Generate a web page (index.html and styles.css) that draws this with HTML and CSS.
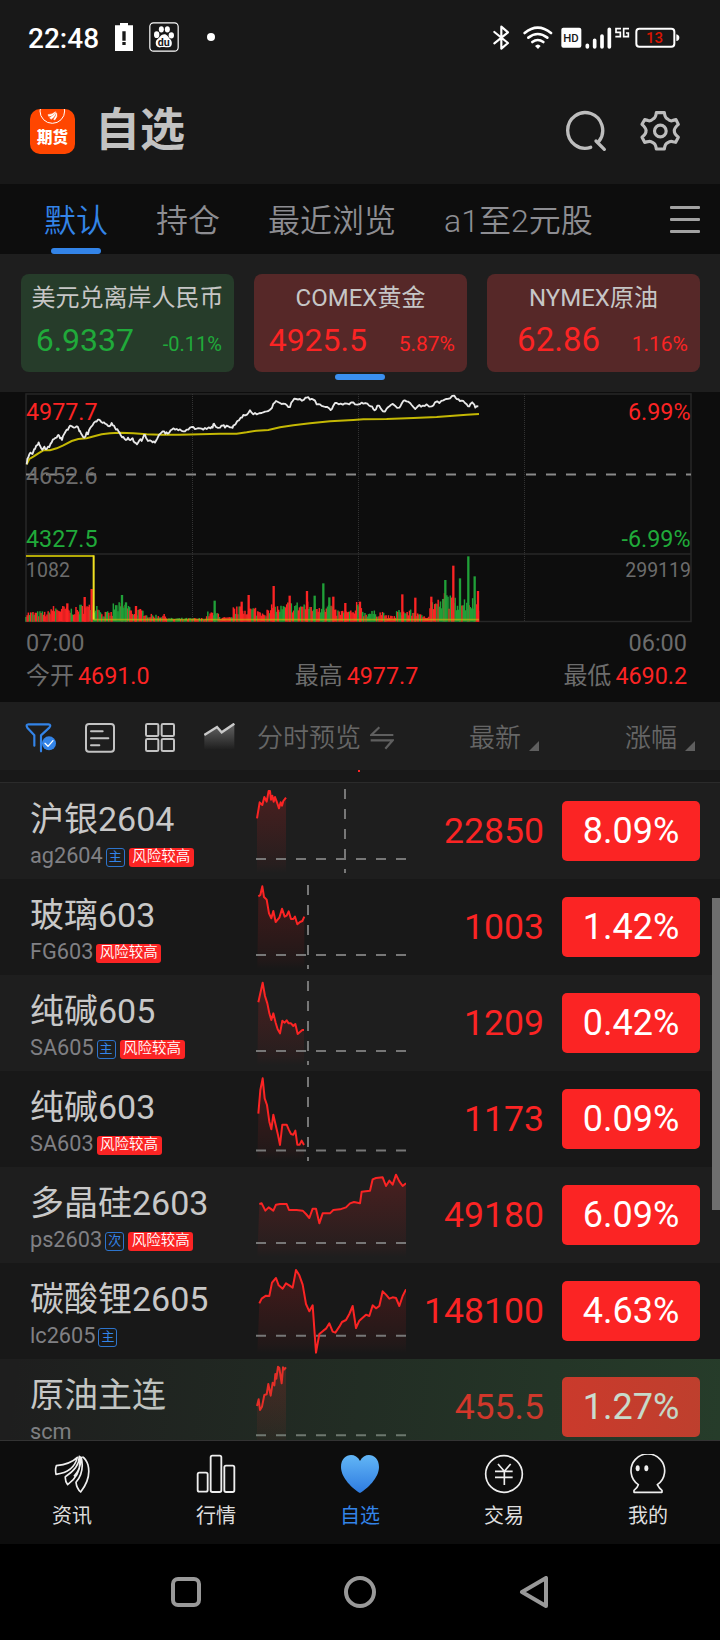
FILE: index.html
```html
<!DOCTYPE html>
<html lang="zh-CN">
<head>
<meta charset="utf-8">
<title>自选</title>
<link rel="stylesheet" href="styles.css">
</head>
<body>
<div class="phone">
  <div class="status">
    <div class="status-left">
      <span class="clock">22:48</span>
      <svg class="i-warn" width="18" height="28" viewBox="345 69 54 84"><path fill="#fff" d="M360 69h24v7h15v77h-54V76h15z"/><path fill="#181818" d="M367 94h10v28h-10zM367 126h10v9h-10z"/></svg>
      <svg class="i-paw" width="30" height="30" viewBox="447 66 90 90">
        <rect x="449.500" y="68.500" width="85" height="85" rx="11" fill="none" stroke="#fff" stroke-width="3.500"/>
        <g fill="#fff"><ellipse cx="470" cy="104" rx="8" ry="10"/><ellipse cx="484" cy="88" rx="7.500" ry="9.500"/><ellipse cx="502" cy="88" rx="7.500" ry="9.500"/><ellipse cx="514" cy="106" rx="8" ry="9.500"/><path d="M493 103c8 0 11 8 17 14 9 8 7 25-5 25-7 0-18-2-24 0-14 2-18-16-9-24 8-6 11-15 21-15z"/></g>
        <text class="paw-text" x="473" y="138">du</text>
      </svg>
      <svg class="i-dot" width="8" height="8" viewBox="0 0 8 8"><circle cx="4" cy="4" r="4" fill="#fff"/></svg>
    </div>
    <svg width="190" height="28" viewBox="395 70 570 84">
      <path fill="none" stroke="#fff" stroke-width="6.500" stroke-linejoin="round" stroke-linecap="round" d="M402 94l41 33-20 17V78l20 17-41 33"/>
      <g fill="none" stroke="#fff" stroke-width="8" stroke-linecap="round"><path d="M493 97Q532 65 572 97"/><path d="M504 111Q532 89 561 111"/><path d="M516 124Q532 112 549 124"/></g>
      <path fill="#fff" d="M524 136q9-9 17 0l-8 9z"/>
      <rect x="603" y="81" width="60" height="60" rx="6" fill="#fff"/>
      <text class="hd" x="609" y="124">HD</text>
      <g stroke="#fff" stroke-width="11" stroke-linecap="round"><path d="M681 134v5M703 119v20M725 106v33M747 86v53"/></g>
      <path fill="none" stroke="#fff" stroke-width="5" d="M782 84h-15v11h13v13h-15M806 84h-16v24h14V97h-7"/>
      <rect x="828" y="84" width="114" height="54" rx="9" fill="none" stroke="#fff" stroke-width="6"/>
      <path fill="#fff" d="M948 101q9 2 9 10t-9 10z"/>
      <text class="batt" x="857" y="128.500">13</text>
    </svg>
  </div>

  <header class="header">
    <div class="logo">
      <svg width="45" height="20" viewBox="90 327 135 60"><circle cx="157" cy="333" r="37" fill="none" stroke="#fff" stroke-width="3"/><path d="M144 344q14-1 23-9-7 12-21 14zM149 353q12-5 19-16-3 15-15 21zM161 358q7-8 9-19 4 11-6 21z" fill="#fff" stroke="#fff" stroke-width="1.500"/></svg>
      <span class="logo-text">期货</span>
    </div>
    <h1 class="title">自选</h1>
    <svg class="i-search" width="42" height="42" viewBox="615 333 126 126" fill="none" stroke="#bdbdbd" stroke-width="10" stroke-linecap="round"><path d="M692 445A52.500 53.500 0 1 1 717 427"/><path d="M708 426l25 25"/></svg>
    <svg width="42" height="42" viewBox="836 333 126 126" fill="none" stroke="#bdbdbd" stroke-width="9.500" stroke-linejoin="round"><path d="M888 341H912Q914 357 922 360 930 368 938 364L947 362 954 376Q941 388 942 395 941 404 954 415L946 430 938 428Q930 425 922 431 914 434 912 450H888Q886 434 878 431 870 425 862 428L853 430 845 415Q858 404 857 395 858 388 845 376L853 362 862 364Q870 368 878 360 886 357 888 341z"/><circle cx="900" cy="396" r="17.500"/></svg>
  </header>

  <nav class="tabs">
    <span class="tab tab-on">默认</span><span class="tab">持仓</span><span class="tab">最近浏览</span><span class="tab">a1至2元股</span>
    <span class="menu"><i></i><i></i><i></i></span>
  </nav>

  <section class="indexes">
    <div class="card down"><div class="card-name">美元兑离岸人民币</div><div class="card-nums"><span class="card-price">6.9337</span><span class="card-pct small">-0.11%</span></div></div>
    <div class="card up"><div class="card-name">COMEX黄金</div><div class="card-nums"><span class="card-price">4925.5</span><span class="card-pct">5.87%</span></div></div>
    <div class="card up"><div class="card-name">NYMEX原油</div><div class="card-nums"><span class="card-price big">62.86</span><span class="card-pct">1.16%</span></div></div>
    <i class="pager"></i>
  </section>

  <section class="chart">
    <svg class="plot" width="720" height="232" viewBox="0 392 720 232">
      <g fill="none" stroke="#272727" stroke-width="1.500"><path d="M26 394H691V621.500H26zM26 554H691"/><path stroke="#333" stroke-width="1" stroke-dasharray="1 1" d="M192.500 394V621M358.500 394V621M524.500 394V621"/></g>
      <path d="M26 474.500H691" stroke="#8a8a8a" stroke-width="2.200" stroke-dasharray="10 10"/>
      <g class="lbl"><text class="t-up" x="26" y="420">4977.7</text><text class="t-dim" x="26" y="484">4652.6</text><text class="t-down" x="26" y="547">4327.5</text><text class="t-dim sm" x="26" y="577">1082</text></g>
      <g class="lbl end"><text class="t-up" x="690.500" y="420">6.99%</text><text class="t-down" x="690.500" y="547">-6.99%</text><text class="t-dim sm" x="691" y="577">299119</text></g>
      <g transform="translate(0 385) scale(.33333)" fill="none">
        <g id="volume"></g>
        <path stroke="#b3a906" stroke-width="6" d="M78 513H281"/><path stroke="#f0e022" stroke-width="6" d="M281 511V704"/><path stroke="#c8b80a" stroke-opacity=".65" stroke-width="5" d="M281 704H1437"/>
        <polyline stroke="#c4b804" stroke-width="6" points="80,238 88,222 100,215 115,205 130,196 150,196 170,190 190,181 215,168 235,162 260,160 285,153 305,148 330,145 360,143 400,145 440,148 480,149 540,149 600,148 660,146 710,146 740,142 770,137 805,135 840,127 880,121 930,115 990,109 1060,105 1090,103 1160,102 1240,99 1310,96 1350,93 1400,89 1437,87"/>
        <polyline id="price" stroke="#e8e8e8" stroke-width="5.500" stroke-linejoin="round" points="80,238 82,222 88,208 95,206 100,200 105,192 112,180 116,172 120,182 127,194 133,185 140,192 148,186 155,172 162,162 170,158 175,150 180,160 186,165 192,148 200,134 207,127 214,123 222,128 230,124 236,132 240,138 246,150 253,158 260,142 264,148 270,130 277,122 283,112 290,110 297,104 303,110 312,112 320,118 328,124 335,114 342,122 348,134 356,140 362,150 370,156 378,165 384,158 392,165 398,160 403,172 411,178 418,166 425,168 432,150 438,158 444,168 450,166 458,172 465,173 472,160 482,145 488,139 496,146 503,146 512,136 520,130 530,132 540,133 550,139 560,134 570,128 580,126 590,131 600,130 610,134 620,132 632,130 638,128 642,116 648,126 660,128 668,122 675,128 685,124 695,127 700,122 712,108 722,98 730,90 742,88 750,76 760,88 770,88 785,84 795,80 805,78 815,70 820,56 828,48 840,54 850,56 860,60 870,66 878,48 888,42 900,42 912,44 920,38 930,44 940,44 950,58 960,58 970,64 982,66 992,75 1000,62 1010,54 1022,56 1035,55 1048,58 1055,52 1065,58 1080,57 1090,56 1102,56 1112,64 1120,72 1124,76 1132,62 1142,70 1155,80 1165,66 1172,60 1185,62 1198,68 1206,54 1214,46 1225,50 1235,60 1246,72 1258,60 1268,62 1280,58 1295,64 1305,52 1318,54 1330,46 1338,42 1350,40 1363,32 1370,42 1380,48 1390,48 1400,58 1408,64 1413,55 1420,56 1426,68 1435,64"/>
      </g>
    </svg>
    <div class="chart-row times"><span>07:00</span><span>06:00</span></div>
    <div class="chart-row"><span>今开<b>4691.0</b></span><span>最高<b>4977.7</b></span><span>最低<b>4690.2</b></span></div>
  </section>

  <section class="toolbar">
    <svg width="32" height="32" viewBox="75 80 96 96" fill="none" stroke="#3384e8" stroke-width="6.500" stroke-linejoin="round" stroke-linecap="round"><path d="M103 151V120L82 97Q76 87 86 87H145Q155 88 148 97L123 120V168"/><circle cx="147" cy="144" r="21" fill="#3384e8" stroke="none"/><path stroke="#fff" stroke-width="4" d="M135 144l9 9 15-17"/></svg>
    <svg width="30" height="30" viewBox="257 83 90 90" fill="none" stroke="#c3c3c3" stroke-width="6" stroke-linecap="round"><rect x="260" y="86" width="84" height="83" rx="9"/><path d="M275 108h35M275 129h52M275 150h25"/></svg>
    <svg width="30" height="30" viewBox="435 83 90 90" fill="none" stroke="#c3c3c3" stroke-width="6"><rect x="438" y="86" width="37" height="36" rx="4"/><rect x="485" y="86" width="37" height="36" rx="4"/><rect x="438" y="131" width="37" height="36" rx="4"/><rect x="485" y="131" width="37" height="36" rx="4"/></svg>
    <svg width="31" height="30" viewBox="614 80 93 90"><defs><linearGradient id="gl" x1="0" y1="0" x2="0" y2="1"><stop offset="0" stop-color="#666"/><stop offset="1" stop-color="#666" stop-opacity="0"/></linearGradient></defs><path fill="url(#gl)" d="M615 116l38-24 14 16 38-26V160H615z"/><path fill="none" stroke="#c9c9c9" stroke-width="7" d="M615 116l38-24 14 16 38-26"/></svg>
    <span class="tb-label preview">分时预览</span>
    <svg class="i-swap" width="24" height="24" viewBox="1114 92 72 72" fill="none" stroke="#5f5f5f" stroke-width="6.500"><path d="M1184 119H1118L1142 96M1116 135H1182L1160 160"/></svg>
    <span class="tb-label latest">最新</span><i class="tri"></i>
    <span class="tb-label change">涨幅</span><i class="tri"></i>
  </section>

  <main class="list">
    <div class="stub"><i></i></div>
    <div class="row alt">
      <div class="id"><div class="name">沪银2604</div><div class="meta"><span class="code">ag2604</span><span class="kind">主</span><span class="risk">风险较高</span></div></div>
      <svg class="spark" viewBox="768 264 450 288"><path class="area" d="M771,370 779,322 787,330 793,306 800,320 806,288 810,288 813,314 817,302 821,320 825,306 831,322 837,340 842,322 846,332 850,318 858,308V534H771z"/><path class="axis" d="M768 492H1218M1035 282V534"/><polyline points="771,370 779,322 787,330 793,306 800,320 806,288 810,288 813,314 817,302 821,320 825,306 831,322 837,340 842,322 846,332 850,318 858,308"/></svg>
      <span class="price">22850</span><span class="pill">8.09%</span>
    </div>
    <div class="row">
      <div class="id"><div class="name">玻璃603</div><div class="meta"><span class="code">FG603</span><span class="risk">风险较高</span></div></div>
      <svg class="spark" viewBox="768 552 450 288"><path class="area" d="M775,604 781,600 787,574 792,606 800,614 807,655 814,670 820,648 827,681 838,668 846,641 854,665 860,662 866,649 873,672 880,672 885,665 892,688 900,681 907,678 913,665V822H772z"/><path class="axis" d="M768 780H1218M924 570V822"/><polyline points="775,604 781,600 787,574 792,606 800,614 807,655 814,670 820,648 827,681 838,668 846,641 854,665 860,662 866,649 873,672 880,672 885,665 892,688 900,681 907,678 913,665"/></svg>
      <span class="price">1003</span><span class="pill">1.42%</span>
    </div>
    <div class="row alt">
      <div class="id"><div class="name">纯碱605</div><div class="meta"><span class="code">SA605</span><span class="kind">主</span><span class="risk">风险较高</span></div></div>
      <svg class="spark" viewBox="768 15 450 288"><path class="area" d="M775,97 788,38 795,78 802,100 808,130 814,150 820,130 827,158 833,178 840,190 847,152 854,158 860,151 866,160 873,160 880,168 886,162 893,192 900,186 907,180 912,180V285H772z"/><path class="axis" d="M768 243H1218M924 33V285"/><polyline points="775,97 788,38 795,78 802,100 808,130 814,150 820,130 827,158 833,178 840,190 847,152 854,158 860,151 866,160 873,160 880,168 886,162 893,192 900,186 907,180 912,180"/></svg>
      <span class="price">1209</span><span class="pill">0.42%</span>
    </div>
    <div class="row">
      <div class="id"><div class="name">纯碱603</div><div class="meta"><span class="code">SA603</span><span class="risk">风险较高</span></div></div>
      <svg class="spark" viewBox="768 303 450 288"><path class="area" d="M775,431 781,360 788,325 794,385 801,405 808,455 814,478 820,434 827,465 834,495 840,525 847,464 860,464 866,478 873,492 880,494 886,482 892,524 899,524 905,512 912,525V573H772z"/><path class="axis" d="M768 541.500H1218M924 321V573"/><polyline points="775,431 781,360 788,325 794,385 801,405 808,455 814,478 820,434 827,465 834,495 840,525 847,464 860,464 866,478 873,492 880,494 886,482 892,524 899,524 905,512 912,525"/></svg>
      <span class="price">1173</span><span class="pill">0.09%</span>
    </div>
    <div class="row alt">
      <div class="id"><div class="name">多晶硅2603</div><div class="meta"><span class="code">ps2603</span><span class="kind">次</span><span class="risk">风险较高</span></div></div>
      <svg class="spark" viewBox="768 -99 450 288"><path class="area" d="M778,12 785,10 790,20 796,32 806,22 820,32 828,14 840,12 860,12 867,30 890,30 908,32 918,42 928,54 938,26 948,26 958,70 968,40 990,40 1000,30 1020,28 1038,22 1050,10 1062,6 1080,10 1085,-25 1110,-28 1118,-62 1128,-66 1148,-68 1158,-42 1168,-58 1178,-46 1188,-76 1198,-56 1208,-42 1218,-50V171H772z"/><path class="axis" d="M768 129H1218"/><polyline points="778,12 785,10 790,20 796,32 806,22 820,32 828,14 840,12 860,12 867,30 890,30 908,32 918,42 928,54 938,26 948,26 958,70 968,40 990,40 1000,30 1020,28 1038,22 1050,10 1062,6 1080,10 1085,-25 1110,-28 1118,-62 1128,-66 1148,-68 1158,-42 1168,-58 1178,-46 1188,-76 1198,-56 1208,-42 1218,-50"/></svg>
      <span class="price">49180</span><span class="pill">6.09%</span>
    </div>
    <div class="row">
      <div class="id"><div class="name">碳酸锂2605</div><div class="meta"><span class="code">lc2605</span><span class="kind">主</span></div></div>
      <svg class="spark" viewBox="768 189 450 288"><path class="area" d="M778,310 785,296 798,287 808,288 816,248 828,234 836,256 848,266 858,250 868,256 878,263 888,210 898,226 908,254 918,312 928,334 938,316 948,458 958,402 970,392 978,386 988,370 998,395 1006,398 1018,380 1026,366 1038,360 1048,342 1058,318 1068,384 1078,362 1098,344 1108,348 1118,316 1128,325 1138,318 1148,274 1158,284 1168,296 1178,292 1188,294 1198,318 1208,288 1218,268V459H772z"/><path class="axis" d="M768 407.500H1218"/><polyline points="778,310 785,296 798,287 808,288 816,248 828,234 836,256 848,266 858,250 868,256 878,263 888,210 898,226 908,254 918,312 928,334 938,316 948,458 958,402 970,392 978,386 988,370 998,395 1006,398 1018,380 1026,366 1038,360 1048,342 1058,318 1068,384 1078,362 1098,344 1108,348 1118,316 1128,325 1138,318 1148,274 1158,284 1168,296 1178,292 1188,294 1198,318 1208,288 1218,268"/></svg>
      <span class="price">148100</span><span class="pill">4.63%</span>
    </div>
    <div class="row alt flash">
      <div class="id"><div class="name">原油主连</div><div class="meta"><span class="code">scm</span></div></div>
      <svg class="spark" viewBox="768 477 450 288"><path class="area" d="M771,618 776,598 780,630 786,620 793,585 800,583 805,552 812,587 818,548 823,556 826,522 829,536 834,500 838,504 845,550 849,502 853,508 858,502V747H771z"/><path class="axis" d="M768 705.500H1218"/><polyline points="771,618 776,598 780,630 786,620 793,585 800,583 805,552 812,587 818,548 823,556 826,522 829,536 834,500 838,504 845,550 849,502 853,508 858,502"/></svg>
      <span class="price">455.5</span><span class="pill">1.27%</span>
    </div>
    <i class="scrollbar"></i>
  </main>

  <nav class="bottom">
    <div class="item"><svg width="40" height="40" viewBox="156 72 120 120" fill="none" stroke="#eee" stroke-width="5" stroke-linejoin="round"><path d="M232 82Q212 102 169 107 165 118 168 133 222 126 232 82zM238 79Q238 114 196 140 195 154 203 164 248 131 238 79zM243 80Q255 125 228 157 230 175 242 186 274 145 264 105 258 86 247 80M240 79Q247 112 222 139"/></svg><span>资讯</span></div>
    <div class="item"><svg width="40" height="40" viewBox="588 72 120 120" fill="none" stroke="#eee" stroke-width="5.500"><rect x="593" y="128" width="30" height="57" rx="5"/><rect x="632" y="77" width="32" height="109" rx="5"/><rect x="673" y="107" width="30" height="79" rx="5"/></svg><span>行情</span></div>
    <div class="item on"><svg width="40" height="40" viewBox="0 0 40 40"><defs><linearGradient id="gh" x1="0" y1="0" x2="0" y2="1"><stop offset="0" stop-color="#62b6f6"/><stop offset="1" stop-color="#2e7be0"/></linearGradient></defs><path fill="url(#gh)" d="M20 39C13 35 1 24 1 13 1 0 15-3 20 7 25-3 39 0 39 13 39 24 27 35 20 39z"/></svg><span>自选</span></div>
    <div class="item"><svg width="40" height="40" viewBox="372 312 120 120" fill="none" stroke="#eee" stroke-width="5"><circle cx="432" cy="372" r="55"/><path d="M414 342l19 22 19-22M433 364v41M405 364h53M405 382h53"/></svg><span>交易</span></div>
    <div class="item"><svg width="40" height="40" viewBox="804 312 120 120" fill="none" stroke="#eee" stroke-width="5" stroke-linejoin="round"><path d="M835 404A50.500 50.500 0 1 1 892 404Q898 416 906 421V427H822V421Q832 414 835 404z"/><ellipse cx="833" cy="355" rx="6" ry="9" fill="#eee" stroke="none"/><ellipse cx="859" cy="355" rx="6" ry="9" fill="#eee" stroke="none"/></svg><span>我的</span></div>
  </nav>

  <div class="sysnav">
    <svg width="32" height="32" viewBox="0 0 32 32" fill="none" stroke="#999" stroke-width="4"><rect x="3" y="3" width="26" height="26" rx="5"/></svg>
    <svg width="32" height="32" viewBox="0 0 32 32" fill="none" stroke="#999" stroke-width="4"><circle cx="16" cy="16" r="14"/></svg>
    <svg width="32" height="32" viewBox="0 0 32 32" fill="none" stroke="#999" stroke-width="4" stroke-linejoin="round"><path d="M28 2V30L4 16z"/></svg>
  </div>
</div>
<script src="app.js"></script>
</body>
</html>
```

FILE: styles.css
```css
* { box-sizing: border-box; }
body { margin: 0; background: #000; font-family: Roboto, "Noto Sans CJK SC", sans-serif; color: #c6c6c6; }
svg { display: block; flex: none; }
i { font-style: normal; }
.phone { width: 720px; height: 1640px; overflow: hidden; background: #181818; display: flex; flex-direction: column; }
.phone > * { flex: none; }

.status { height: 76px; padding: 0 38px 0 28px; display: flex; align-items: center; justify-content: space-between; }
.status > svg { margin: 0 0 1px; }
.status-left { display: flex; align-items: center; }
.clock { font-size: 28px; font-weight: 500; line-height: 40px; color: #fff; width: 87px; margin-top: 1px; }
.i-paw { margin-left: 16px; }
.i-dot { margin: -2px 0 0 28px; }
.i-warn, .i-paw { margin-bottom: 2px; }
.paw-text { font: 700 32px Roboto, sans-serif; fill: #181818; }
.hd { font: 500 34px Roboto, sans-serif; fill: #181818; }
.batt { font: 500 45px Roboto, sans-serif; fill: #d81400; }

.header { height: 108px; padding: 2px 39px 0 30px; display: flex; align-items: center; }
.logo { width: 45px; height: 45px; border-radius: 10px; background: #ff4600; overflow: hidden; }
.logo-text { display: block; font-size: 15.500px; font-weight: 900; line-height: 18px; color: #fff; text-align: center; }
.title { margin: 0 auto 0 20px; font-size: 45px; font-weight: 600; line-height: 60px; color: #c2c2c2; }
.i-search { margin-right: 32px; }

.tabs { height: 70px; background: #0d0d0d; padding: 5px 20px 0 44px; display: flex; gap: 48px; }
.tab { font-size: 32px; line-height: 64px; color: #8d8d92; font-weight: 350; white-space: nowrap; position: relative; }
.tab-on { color: #3384e8; }
.tab-on::after { content: ""; position: absolute; left: 7px; bottom: 0; width: 50px; height: 6px; border-radius: 3px; background: #3384e8; }
.menu { margin-left: auto; width: 30px; padding-top: 17px; display: flex; flex-direction: column; gap: 9px; }
.menu i { height: 3px; background: #a2a2a2; border-radius: 1px; }

.indexes { height: 138px; background: #1e1e1e; padding: 20px 20px 0 21px; display: flex; gap: 20px; position: relative; }
.card { width: 213px; height: 98px; border-radius: 8px; padding-top: 9px; }
.down { background: #263c2a; color: #20aa3a; }
.up { background: #562828; color: #fb2424; }
.card-name { font-size: 24px; line-height: 30px; text-align: center; color: #c6c6c6; }
.card-nums { display: flex; align-items: baseline; justify-content: space-between; padding-right: 12px; }
.card-price { width: 113px; text-align: right; font-size: 32px; line-height: 54px; }
.card-price.big { font-size: 33px; }
.card-pct { font-size: 21px; }
.card-pct.small { font-size: 20px; }
.pager { position: absolute; left: 335px; bottom: 12px; width: 50px; height: 6px; border-radius: 3px; background: #3a8ff0; }

.chart { height: 310px; background: #0d0d0d; color: #6c6c6c; font-size: 24px; }
.lbl text { font: 400 23.300px Roboto, sans-serif; }
.lbl text.sm { font-size: 19.500px; }
.end { text-anchor: end; }
.lbl .t-up { fill: #fb2424; }
.lbl .t-down { fill: #20aa3a; }
.lbl .t-dim { fill: #6c6c6c; }
.chart-row { padding: 0 33px 0 26px; display: flex; justify-content: space-between; line-height: 34px; }
.times { line-height: 38px; margin-bottom: -3px; font-size: 23.500px; }
.chart-row b { font-weight: 400; font-size: 23.300px; color: #fb2424; margin-left: 4px; }

.toolbar { height: 68px; background: #1e1e1e; padding: 3px 24px 0 25px; display: flex; align-items: center; }
.toolbar svg:nth-child(2) { margin-left: 28px; }
.toolbar svg:nth-child(3), .toolbar svg:nth-child(4) { margin-left: 30px; }
.toolbar svg:nth-child(4) { margin-left: 29px; }
.tb-label { font-size: 26px; font-weight: 350; line-height: 50px; color: #666; white-space: nowrap; flex: none; }
.preview { margin-left: 22px; }
.toolbar .i-swap { margin-left: 9px; }
.latest { margin-left: 75px; }
.change { margin-left: 86px; }
.tri { margin: 17px 0 0 8px; border-left: 10px solid transparent; border-bottom: 10px solid #5f5f5f; }

.list { height: 670px; overflow: hidden; position: relative; }
.stub { height: 13px; border-bottom: 1px solid #2b2b2b; background: #181818; }
.stub i { display: block; width: 2px; height: 2px; margin-left: 358px; background: #fb2424; }
.row { height: 96px; padding: 0 20px 0 30px; background: #181818; display: flex; align-items: center; position: relative; }
.alt { background: #1e1e1e; }
.id { width: 226px; height: 96px; padding-top: 14px; }
.name { font-size: 34px; line-height: 44px; white-space: nowrap; color: #c8c8c8; }
.meta { height: 24px; margin-top: 3px; display: flex; align-items: center; }
.code { font-size: 21.700px; line-height: 24px; color: #808084; margin-right: 3px; }
.kind, .risk { height: 19px; border-radius: 3px; font-size: 14.500px; text-align: center; margin-top: 2px; }
.kind { width: 19px; border: 1px solid #2d74cc; color: #3384e8; font-size: 13px; line-height: 16px; margin-right: 4px; }
.risk { width: 65px; background: #fb2424; color: #fff; line-height: 18px; font-weight: 350; }
.spark { width: 150px; height: 96px; }
.spark polyline { fill: none; stroke: #fb2424; stroke-width: 6; stroke-linejoin: round; }
.area { fill: url(#fade); }
.axis { fill: none; stroke: #777; stroke-width: 6; stroke-dasharray: 30 30; }
.price { width: 138px; text-align: right; font-size: 35.600px; line-height: 60px; color: #fb2424; }
.pill { width: 138px; margin-left: auto; height: 60px; border-radius: 5px; background: #fb2424; color: #fff; font-size: 36px; line-height: 60px; text-align: center; }
.flash::after { content: ""; position: absolute; inset: 0; background: linear-gradient(97deg, rgba(55, 124, 67, 0) 2%, rgba(55, 124, 67, .16) 50%, rgba(55, 124, 67, .32)); }
.scrollbar { position: absolute; right: 0; top: 128px; width: 8px; height: 312px; background: #6e6e6e; }

.bottom { height: 104px; border-top: 1px solid #333; background: #0d0d0d; display: flex; }
.item { width: 144px; padding-top: 13px; display: flex; flex-direction: column; align-items: center; font-size: 20px; line-height: 26px; color: #dedede; }
.item span { margin-top: 9px; }
.on { color: #3384e8; }
.sysnav { height: 96px; background: #000; display: flex; justify-content: space-between; align-items: center; padding: 0 170px; }
```

FILE: app.js
```js
const NS = "http://www.w3.org/2000/svg";

// Shared gradient for the areas under the row sparklines.
const defs = document.createElementNS(NS, "defs");
defs.innerHTML = '<linearGradient id="fade" x1="0" y1="0" x2="0" y2="1"><stop offset="0" stop-color="#fb2424" stop-opacity=".2"/><stop offset=".9" stop-color="#fb2424" stop-opacity=".04"/><stop offset="1" stop-color="#fb2424" stop-opacity="0"/></linearGradient>';
document.querySelector(".plot").prepend(defs);

// Volume profile: [from, to, typical height, share of rising bars].
const profile = [
  [78,150,25,.6],[150,200,38,.75],[200,240,34,.6],[240,280,42,.75],[280,302,48,.3],[302,340,24,.5],
  [340,390,45,.3],[390,440,30,.7],[440,500,18,.6],[500,620,9,.5],[620,660,24,.6],[660,700,11,.7],
  [700,770,36,.8],[770,815,30,.7],[815,860,40,.6],[860,930,48,.6],[930,1000,45,.45],[1000,1070,28,.7],
  [1070,1088,46,.5],[1088,1155,26,.35],[1155,1190,15,.8],[1190,1255,28,.5],[1255,1290,18,.7],
  [1290,1330,55,.7],[1330,1355,70,.3],[1355,1425,58,.4],[1425,1438,60,.6]
];
const peaks = [
  [202,55,1],[254,74,1],[275,98,1],[366,80,0],[378,58,0],[408,47,1],[644,63,0],[725,60,1],[746,80,1],
  [821,107,1],[869,78,1],[921,92,1],[944,78,0],[970,115,0],[988,73,0],[1000,75,1],[1036,56,1],[1080,60,1],
  [1207,82,1],[1246,72,1],[1294,75,1],[1336,125,0],[1360,168,1],[1380,130,0],[1405,196,0],[1424,136,0],[1434,92,1]
];
let seed = 7;
const rnd = () => (seed = (seed * 16807) % 2147483647) / 2147483647;
const bars = [];
for (const [from, to, h, up] of profile)
  for (let x = from; x < to; x += 3.5)
    bars.push([x, Math.max(4, h * (.55 + rnd() * .75)), rnd() < up ? 1 : 0, 4.5]);
bars.push(...peaks.map(p => [...p, 7]));
document.getElementById("volume").innerHTML = bars
  .map(([x, h, up, w]) => `<path stroke="${up ? "#fb2424" : "#20a038"}" stroke-width="${w}" d="M${x} 710V${(710 - h).toFixed(1)}"/>`)
  .join("");

// Tick-level wobble between the sampled price points.
const line = document.getElementById("price");
const pts = line.getAttribute("points").split(" ").map(p => p.split(",").map(Number));
const out = [];
pts.forEach(([x, y], k) => {
  out.push([x, y]);
  const next = pts[k + 1];
  if (next) out.push([(x + next[0]) / 2, (y + next[1]) / 2 + (rnd() - .5) * 9]);
});
line.setAttribute("points", out.map(p => p[0].toFixed(1) + "," + p[1].toFixed(1)).join(" "));
```
